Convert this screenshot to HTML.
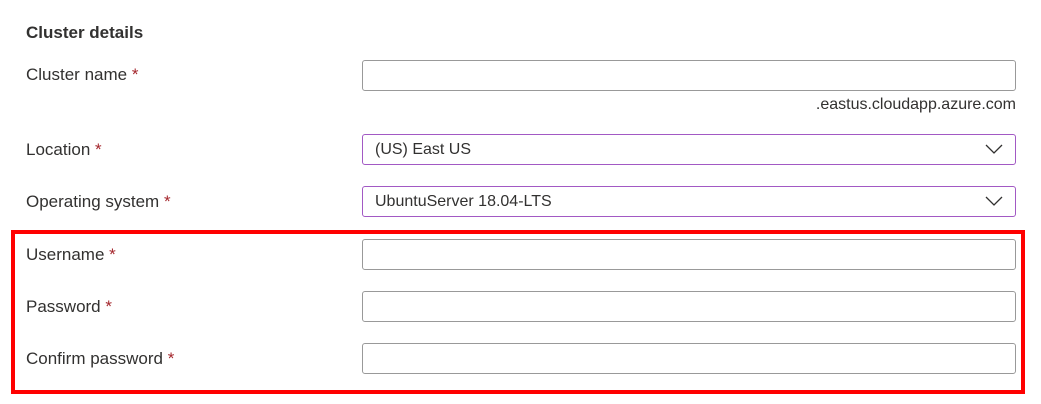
<!DOCTYPE html>
<html><head><style>
body{margin:0;width:1041px;height:404px;background:#fff;font-family:"Liberation Sans",sans-serif;color:#323130;position:relative;overflow:hidden}
.t{position:absolute;left:26px;font-size:17px;white-space:nowrap}
.s{color:#a4262c}
.b{position:absolute;left:362px;width:652px;height:29px;border:1.5px solid #999;border-radius:3px;box-sizing:content-box}
.p{border-color:#a259c4}
.v{position:absolute;left:12px;top:6px;font-size:16px}
.c{position:absolute;right:12px;top:8px}
</style></head><body>
<div class="t" style="top:23px;font-weight:bold">Cluster details</div>
<div class="t" style="top:65px">Cluster name <span class="s">*</span></div>
<div class="b" style="top:60px"></div>
<div style="position:absolute;right:25px;top:96px;font-size:16px">.eastus.cloudapp.azure.com</div>
<div class="t" style="top:140px">Location <span class="s">*</span></div>
<div class="b p" style="top:134px"><span class="v">(US) East US</span><svg class="c" width="18" height="12"><path d="M1 2l8 8 8-8" fill="none" stroke="#323130" stroke-width="1.3"/></svg></div>
<div class="t" style="top:192px">Operating system <span class="s">*</span></div>
<div class="b p" style="top:186px"><span class="v">UbuntuServer 18.04-LTS</span><svg class="c" width="18" height="12"><path d="M1 2l8 8 8-8" fill="none" stroke="#323130" stroke-width="1.3"/></svg></div>
<div class="t" style="top:245px">Username <span class="s">*</span></div>
<div class="b" style="top:239px"></div>
<div class="t" style="top:297px">Password <span class="s">*</span></div>
<div class="b" style="top:291px"></div>
<div class="t" style="top:349px">Confirm password <span class="s">*</span></div>
<div class="b" style="top:343px"></div>
<div style="position:absolute;left:11px;top:230px;width:1006px;height:156px;border:4px solid #f00"></div>
</body></html>
